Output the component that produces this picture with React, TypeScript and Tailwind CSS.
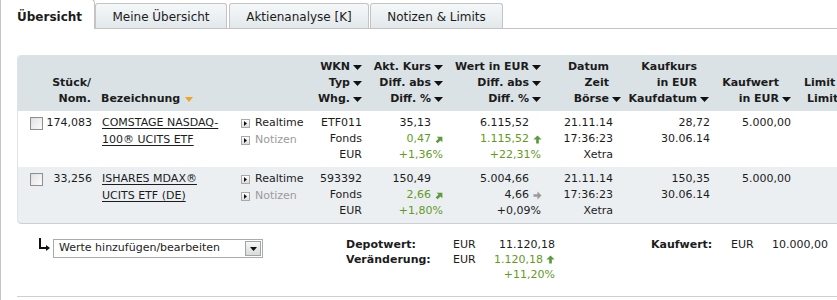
import React from "react";

const GREEN = "text-[#659a1f]";

// little black sort arrow in the table head
const SortArrow = ({ hidden = false }: { hidden?: boolean }) => (
  <svg
    width="9"
    height="5"
    viewBox="0 0 9 5"
    className={hidden ? "invisible ml-[3px] shrink-0" : "ml-[3px] shrink-0"}
  >
    <path d="M0 0H9L4.5 5Z" fill="#111" />
  </svg>
);

// trend arrow: up, diag (north-east) or right
const Trend = ({ dir }: { dir: "up" | "diag" | "right" }) => {
  const deg = dir === "up" ? 0 : dir === "diag" ? 45 : 90;
  const color = dir === "right" ? "#9a9a9a" : "#5b9d3e";
  return (
    <svg width="9" height="9" viewBox="0 0 10 10">
      <g transform={`rotate(${deg} 5 5)`}>
        <path d="M5 0.5L9.5 5H6.5V9.5H3.5V5H0.5Z" fill={color} />
      </g>
    </svg>
  );
};

const Checkbox = () => (
  <div className="h-[13px] w-[13px] border border-[#8f8f8f] bg-gradient-to-br from-[#dcdcdc] to-[#fbfbfb] p-px">
    <div className="h-full w-full bg-gradient-to-br from-[#e4e4e4] to-[#fafafa]" />
  </div>
);

const PlayIcon = () => (
  <div className="flex h-[9px] w-[9px] items-center justify-center border border-[#a9a9a9] bg-gradient-to-b from-[#ffffff] to-[#dedede]">
    <svg width="3" height="5" viewBox="0 0 3 5">
      <path d="M0 0L3 2.5L0 5Z" fill="#111" />
    </svg>
  </div>
);

const HeadLine = ({ text, arrow, ghost }: { text?: string; arrow?: boolean; ghost?: boolean }) => (
  <div className="flex h-[16px] items-center justify-end whitespace-nowrap">
    {text}
    {(arrow || ghost) && <SortArrow hidden={!arrow} />}
  </div>
);

const Val = ({ v, trend, cls = "" }: { v: string; trend?: "up" | "diag" | "right" | null; cls?: string }) => (
  <div className={"flex h-[16px] items-center justify-end whitespace-nowrap " + cls}>
    <span>{v}</span>
    <span className="ml-[4px] flex w-[9px] justify-end">{trend && <Trend dir={trend} />}</span>
  </div>
);

const Line = ({ children, cls = "" }: { children?: React.ReactNode; cls?: string }) => (
  <div className={"h-[16px] whitespace-nowrap leading-[16px] " + cls}>{children}</div>
);

type Pos = {
  qty: string;
  name: [string, string];
  wkn: string;
  kurs: string;
  kursDiff: string;
  kursTrend: "up" | "diag" | "right";
  kursPct: string;
  wert: string;
  wertDiff: string;
  wertTrend: "up" | "diag" | "right";
  wertPct: string;
  wertColor: string;
  kaufkurs: string;
  kaufdatum: string;
  kaufwert: string;
};

const positions: Pos[] = [
  {
    qty: "174,083",
    name: ["COMSTAGE NASDAQ-", "100® UCITS ETF"],
    wkn: "ETF011",
    kurs: "35,13",
    kursDiff: "0,47",
    kursTrend: "diag",
    kursPct: "+1,36%",
    wert: "6.115,52",
    wertDiff: "1.115,52",
    wertTrend: "up",
    wertPct: "+22,31%",
    wertColor: GREEN,
    kaufkurs: "28,72",
    kaufdatum: "30.06.14",
    kaufwert: "5.000,00",
  },
  {
    qty: "33,256",
    name: ["ISHARES MDAX®", "UCITS ETF (DE)"],
    wkn: "593392",
    kurs: "150,49",
    kursDiff: "2,66",
    kursTrend: "diag",
    kursPct: "+1,80%",
    wert: "5.004,66",
    wertDiff: "4,66",
    wertTrend: "right",
    wertPct: "+0,09%",
    wertColor: "",
    kaufkurs: "150,35",
    kaufdatum: "30.06.14",
    kaufwert: "5.000,00",
  },
];

const Row = ({ p, alt }: { p: Pos; alt?: boolean }) => (
  <div
    className={
      alt
        ? "flex rounded-bl-[4px] border-b border-[#c9cfd2] bg-[#ebeff1] pt-[4px] pb-[4px]"
        : "flex bg-white pt-[4px] pb-[4px]"
    }
  >
    <div className="w-[27px] shrink-0 pl-[12px] pt-[2px]">
      <Checkbox />
    </div>
    <div className="w-[47px] shrink-0 text-right">
      <Line>{p.qty}</Line>
    </div>
    <div className="w-[149px] shrink-0 pl-[10px]">
      <Line cls="underline underline-offset-2">{p.name[0]}</Line>
      <Line cls="underline underline-offset-2 mt-[1px]">{p.name[1]}</Line>
    </div>
    <div className="w-[70px] shrink-0">
      <div className="flex h-[16px] items-center gap-[5px]">
        <PlayIcon />
        <span>Realtime</span>
      </div>
      <div className="mt-[1px] flex h-[16px] items-center gap-[5px] text-[#9b9b9b]">
        <PlayIcon />
        <span>Notizen</span>
      </div>
    </div>
    <div className="w-[52px] shrink-0 pr-[1px] text-right">
      <Line>{p.wkn}</Line>
      <Line>Fonds</Line>
      <Line>EUR</Line>
    </div>
    <div className="w-[81px] shrink-0">
      <Val v={p.kurs} />
      <Val v={p.kursDiff} trend={p.kursTrend} cls={GREEN} />
      <Line cls={"pr-[1px] text-right " + GREEN}>{p.kursPct}</Line>
    </div>
    <div className="w-[98px] shrink-0">
      <Val v={p.wert} />
      <Val v={p.wertDiff} trend={p.wertTrend} cls={p.wertColor} />
      <Line cls={"pr-[1px] text-right " + p.wertColor}>{p.wertPct}</Line>
    </div>
    <div className="w-[80px] shrink-0 pr-[9px] text-right">
      <Line>21.11.14</Line>
      <Line>17:36:23</Line>
      <Line>Xetra</Line>
    </div>
    <div className="w-[88px] shrink-0 text-right">
      <Line>{p.kaufkurs}</Line>
      <Line>{p.kaufdatum}</Line>
    </div>
    <div className="w-[82px] shrink-0 pr-[1px] text-right">
      <Line>{p.kaufwert}</Line>
    </div>
    <div className="w-[80px] shrink-0" />
  </div>
);

export default function App() {
  return (
    <div className="h-[300px] w-[837px] overflow-hidden border-l border-[#c4c4c4] bg-white font-['DejaVu_Sans',sans-serif] text-[11px] text-[#1c1c1c]">
      {/* Tabs */}
      <div className="flex h-[29px] items-end border-b border-[#c4c4c4] text-[12px]">
        <div className="relative z-10 -mb-px h-[30px] w-[94px] shrink-0 rounded-tr-[4px] border-t border-r border-[#c4c4c4] bg-white pl-[16px] pt-[9px] font-bold leading-[16px]">
          Übersicht
        </div>
        <div className="h-[25px] w-[132px] shrink-0 rounded-t-[3px] border border-b-0 border-[#c4c4c4] bg-gradient-to-b from-[#f5f8f9] to-[#e2e8eb] text-center leading-[26px]">
          Meine Übersicht
        </div>
        <div className="ml-[2px] h-[25px] w-[140px] shrink-0 rounded-t-[3px] border border-b-0 border-[#c4c4c4] bg-gradient-to-b from-[#f5f8f9] to-[#e2e8eb] text-center leading-[26px]">
          Aktienanalyse [K]
        </div>
        <div className="ml-[1px] h-[25px] w-[133px] shrink-0 rounded-t-[3px] border border-b-0 border-[#c4c4c4] bg-gradient-to-b from-[#f5f8f9] to-[#e2e8eb] text-center leading-[26px]">
          Notizen &amp; Limits
        </div>
      </div>

      <div className="ml-[16px] mt-[26px] w-[840px]">
        {/* Table */}
        <div className="rounded-l-[4px] border-l border-[#dfe4e6]">
          <div className="flex rounded-tl-[4px] bg-[#dbe2e5] pt-[4px] pb-[4px] font-bold">
            <div className="w-[26px] shrink-0" />
            <div className="w-[47px] shrink-0">
              <HeadLine />
              <HeadLine text="Stück/" />
              <HeadLine text="Nom." />
            </div>
            <div className="w-[149px] shrink-0 pl-[10px]">
              <HeadLine />
              <HeadLine />
              <div className="flex h-[16px] items-center">
                Bezeichnung
                <svg width="8" height="5" viewBox="0 0 8 5" className="ml-[5px]">
                  <path d="M0 0H8L4 5Z" fill="#f0a31c" />
                </svg>
              </div>
            </div>
            <div className="w-[70px] shrink-0" />
            <div className="w-[52px] shrink-0">
              <HeadLine text="WKN" arrow />
              <HeadLine text="Typ" arrow />
              <HeadLine text="Whg." arrow />
            </div>
            <div className="w-[81px] shrink-0">
              <HeadLine text="Akt. Kurs" arrow />
              <HeadLine text="Diff. abs" arrow />
              <HeadLine text="Diff. %" arrow />
            </div>
            <div className="w-[98px] shrink-0">
              <HeadLine text="Wert in EUR" arrow />
              <HeadLine text="Diff. abs" arrow />
              <HeadLine text="Diff. %" arrow />
            </div>
            <div className="w-[80px] shrink-0">
              <HeadLine text="Datum" ghost />
              <HeadLine text="Zeit" ghost />
              <HeadLine text="Börse" arrow />
            </div>
            <div className="w-[88px] shrink-0">
              <HeadLine text="Kaufkurs" ghost />
              <HeadLine text="in EUR" ghost />
              <HeadLine text="Kaufdatum" arrow />
            </div>
            <div className="w-[82px] shrink-0">
              <HeadLine />
              <HeadLine text="Kaufwert" ghost />
              <HeadLine text="in EUR" arrow />
            </div>
            <div className="w-[80px] shrink-0">
              <HeadLine />
              <div className="h-[16px] pl-[13px] leading-[16px] whitespace-nowrap">Limit</div>
              <div className="h-[16px] pl-[16px] leading-[16px] whitespace-nowrap">Limit</div>
            </div>
          </div>
          {positions.map((p, i) => (
            <Row key={p.wkn} p={p} alt={i % 2 === 1} />
          ))}
        </div>

        {/* Summary */}
        <div className="flex h-[73px] border-b border-[#cfcfcf] pt-[13px]">
          <div className="ml-[22px] mt-[1px] shrink-0">
            <svg width="12" height="13" viewBox="0 0 12 13">
              <path d="M1 0V10H7" stroke="#111" strokeWidth="2" fill="none" />
              <path d="M7 7L11 10L7 13Z" fill="#111" />
            </svg>
          </div>
          <div className="ml-[2px] mt-[2px] flex h-[19px] w-[210px] shrink-0 items-center border border-[#a5acb2] bg-white pl-[5px] pr-[1px]">
            <span className="flex-1 whitespace-nowrap">Werte hinzufügen/bearbeiten</span>
            <div className="flex h-[15px] w-[16px] items-center justify-center border border-[#9ea4a8] bg-gradient-to-b from-[#f7f7f7] to-[#dadada]">
              <svg width="7" height="4" viewBox="0 0 7 4">
                <path d="M0 0H7L3.5 4Z" fill="#111" />
              </svg>
            </div>
          </div>
          <div className="ml-[83px] shrink-0 leading-[15px]">
            <div className="flex h-[15px]">
              <span className="w-[107px] font-bold">Depotwert:</span>
              <span className="w-[36px]">EUR</span>
              <span className="w-[66px] text-right">11.120,18</span>
            </div>
            <div className="flex h-[15px]">
              <span className="w-[107px] font-bold">Veränderung:</span>
              <span className="w-[36px]">EUR</span>
              <span className={"flex w-[66px] items-center justify-end gap-[3px] " + GREEN}>
                1.120,18
                <Trend dir="up" />
              </span>
            </div>
            <div className="flex h-[15px]">
              <span className="w-[143px]" />
              <span className={"w-[66px] text-right " + GREEN}>+11,20%</span>
            </div>
          </div>
          <div className="ml-[96px] flex h-[15px] shrink-0 leading-[15px]">
            <span className="w-[80px] font-bold">Kaufwert:</span>
            <span className="w-[37px]">EUR</span>
            <span className="w-[60px] text-right">10.000,00</span>
          </div>
        </div>
      </div>
    </div>
  );
}
